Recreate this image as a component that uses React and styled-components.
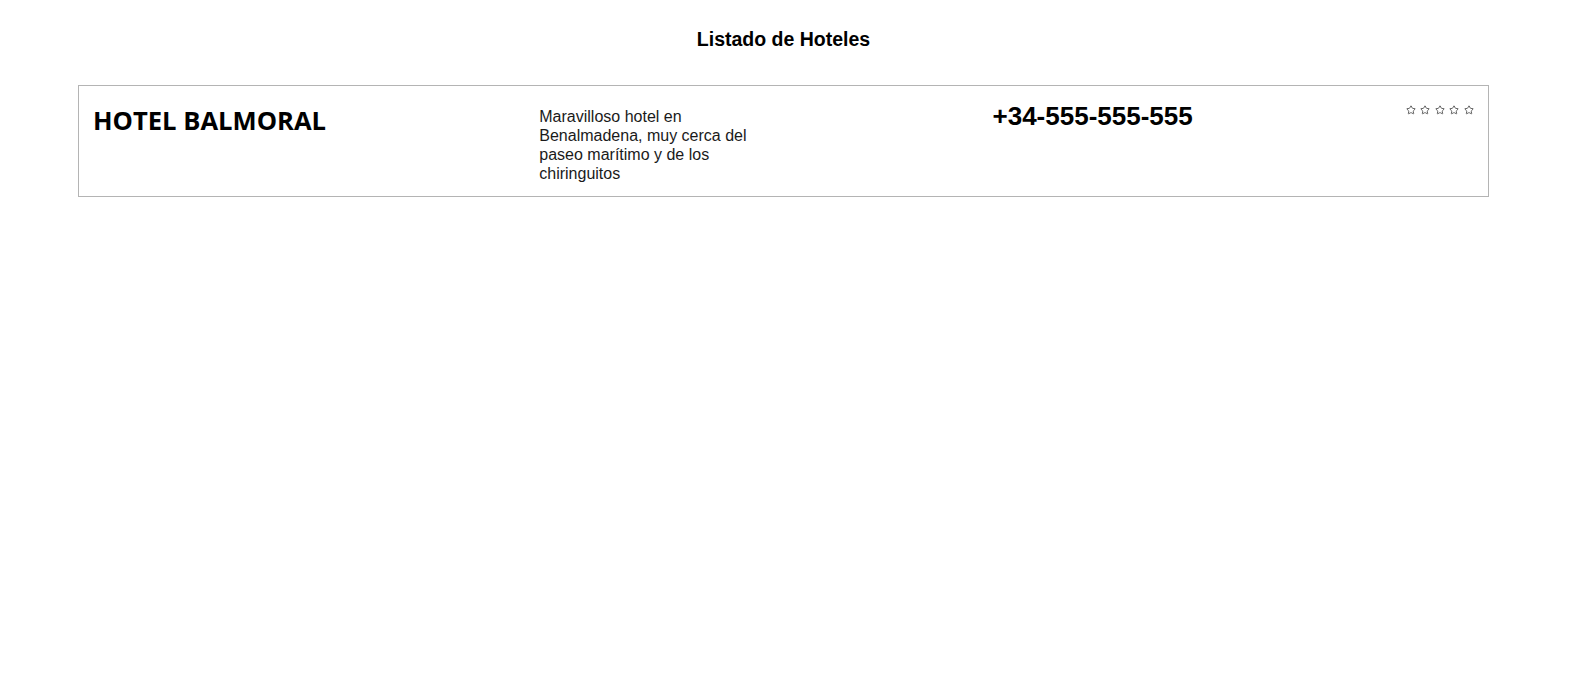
import React from "react";
import styled, { createGlobalStyle } from "styled-components";
import { Star } from "lucide-react";

const GlobalStyle = createGlobalStyle`
  body {
    margin: 0;
    background: #fff;
    font-family: "Liberation Sans", Arial, sans-serif;
    color: #111;
  }
`;

const hotels = [
  {
    name: "HOTEL BALMORAL",
    description:
      "Maravilloso hotel en Benalmadena, muy cerca del paseo marítimo y de los chiringuitos",
    phone: "+34-555-555-555",
    stars: 5,
  },
];

function App() {
  return (
    <Page>
      <GlobalStyle />
      <Title>Listado de Hoteles</Title>
      <List>
        {hotels.map((h) => (
          <Card key={h.name}>
            <Name>{h.name}</Name>
            <Description>{h.description}</Description>
            <Phone>{h.phone}</Phone>
            <Stars>
              {Array.from({ length: h.stars }).map((_, i) => (
                <Star key={i} size={10} strokeWidth={2} />
              ))}
            </Stars>
          </Card>
        ))}
      </List>
    </Page>
  );
}

export default App;

const Page = styled.div`
  width: 1567px;
  padding-top: 28px;
`;

const Title = styled.h3`
  margin: 0 0 35px;
  text-align: center;
  font-size: 19.5px;
  line-height: 22px;
  font-weight: 700;
  color: #000;
`;

const List = styled.div`
  display: flex;
  flex-direction: column;
  gap: 20px;
`;

const Card = styled.div`
  width: 1411px;
  box-sizing: border-box;
  margin: 0 auto;
  border: 1px solid #b4b4b4;
  padding: 14px 14px 13px;
  display: flex;
  justify-content: space-between;
  align-items: flex-start;
`;

const Name = styled.h2`
  margin: 3px 0 0;
  font-family: "Open Sans", sans-serif;
  font-size: 25.6px;
  font-weight: 700;
  color: #000;
`;

const Description = styled.p`
  margin: 7px 0 0;
  width: 240px;
  font-size: 16px;
  line-height: 19px;
  color: #1a1a1a;
`;

const Phone = styled.div`
  margin-top: 1px;
  font-size: 26px;
  font-weight: 700;
  color: #000;
`;

const Stars = styled.div`
  display: flex;
  gap: 4.5px;
  margin-top: 5px;
  color: #444;
`;
